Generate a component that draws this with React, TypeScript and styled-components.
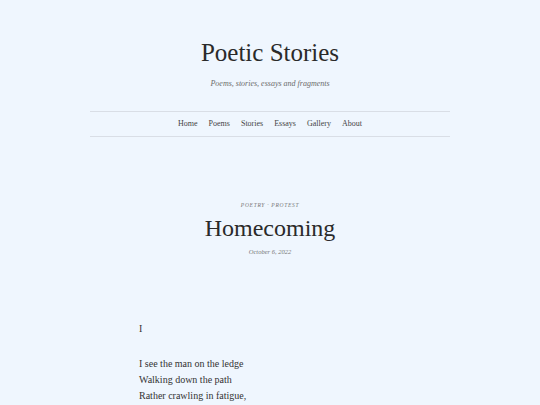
import React from "react";
import styled, { createGlobalStyle } from "styled-components";

const GlobalStyle = createGlobalStyle`
  html, body {
    margin: 0;
    padding: 0;
    background: #eff6fe;
  }
  body {
    font-family: "Liberation Serif", "DejaVu Serif", serif;
    color: #2b2b2b;
  }
`;

const StyledPage = styled.div`
  display: flex;
  flex-direction: column;
  align-items: center;
  width: 540px;
  height: 405px;
  overflow: hidden;
`;

const StyledHeader = styled.header`
  display: flex;
  flex-direction: column;
  align-items: center;
  width: 360px;
  padding-top: 37px;
`;

const StyledTitle = styled.h1`
  margin: 0;
  font-size: 25px;
  font-weight: 400;
  line-height: 32px;
  color: #2a2a2a;
`;

const StyledTagline = styled.p`
  margin: 10px 0 0;
  font-size: 8px;
  font-style: italic;
  color: #6b6b6b;
`;

const StyledNav = styled.nav`
  display: flex;
  justify-content: center;
  gap: 11px;
  width: 100%;
  margin-top: 23px;
  padding: 7px 0;
  border-top: 1px solid #d9dee6;
  border-bottom: 1px solid #d9dee6;
  & > a {
    font-size: 8px;
    line-height: 10px;
    color: #444;
    text-decoration: none;
  }
`;

const StyledPost = styled.article`
  display: flex;
  flex-direction: column;
  align-items: center;
  margin-top: 65px;
`;

const StyledCategory = styled.div`
  font-size: 5.5px;
  font-style: italic;
  letter-spacing: 0.7px;
  text-transform: uppercase;
  color: #777;
`;

const StyledPostTitle = styled.h2`
  margin: 5px 0 0;
  font-size: 24px;
  font-weight: 400;
  line-height: 30px;
  color: #2a2a2a;
`;

const StyledDate = styled.div`
  margin-top: 5px;
  font-size: 6.5px;
  font-style: italic;
  color: #777;
`;

const StyledBody = styled.div`
  width: 262px;
  margin-top: 66px;
  font-size: 10px;
  color: #333;
  & > p {
    margin: 0 0 19px;
    line-height: 16px;
  }
`;

const App = () => {
  return (
    <StyledPage>
      <GlobalStyle />
      <StyledHeader>
        <StyledTitle>Poetic Stories</StyledTitle>
        <StyledTagline>Poems, stories, essays and fragments</StyledTagline>
        <StyledNav>
          <a href="#">Home</a>
          <a href="#">Poems</a>
          <a href="#">Stories</a>
          <a href="#">Essays</a>
          <a href="#">Gallery</a>
          <a href="#">About</a>
        </StyledNav>
      </StyledHeader>
      <StyledPost>
        <StyledCategory>Poetry · Protest</StyledCategory>
        <StyledPostTitle>Homecoming</StyledPostTitle>
        <StyledDate>October 6, 2022</StyledDate>
        <StyledBody>
          <p>I</p>
          <p>
            I see the man on the ledge
            <br />
            Walking down the path
            <br />
            Rather crawling in fatigue,
          </p>
        </StyledBody>
      </StyledPost>
    </StyledPage>
  );
};

export default App;
